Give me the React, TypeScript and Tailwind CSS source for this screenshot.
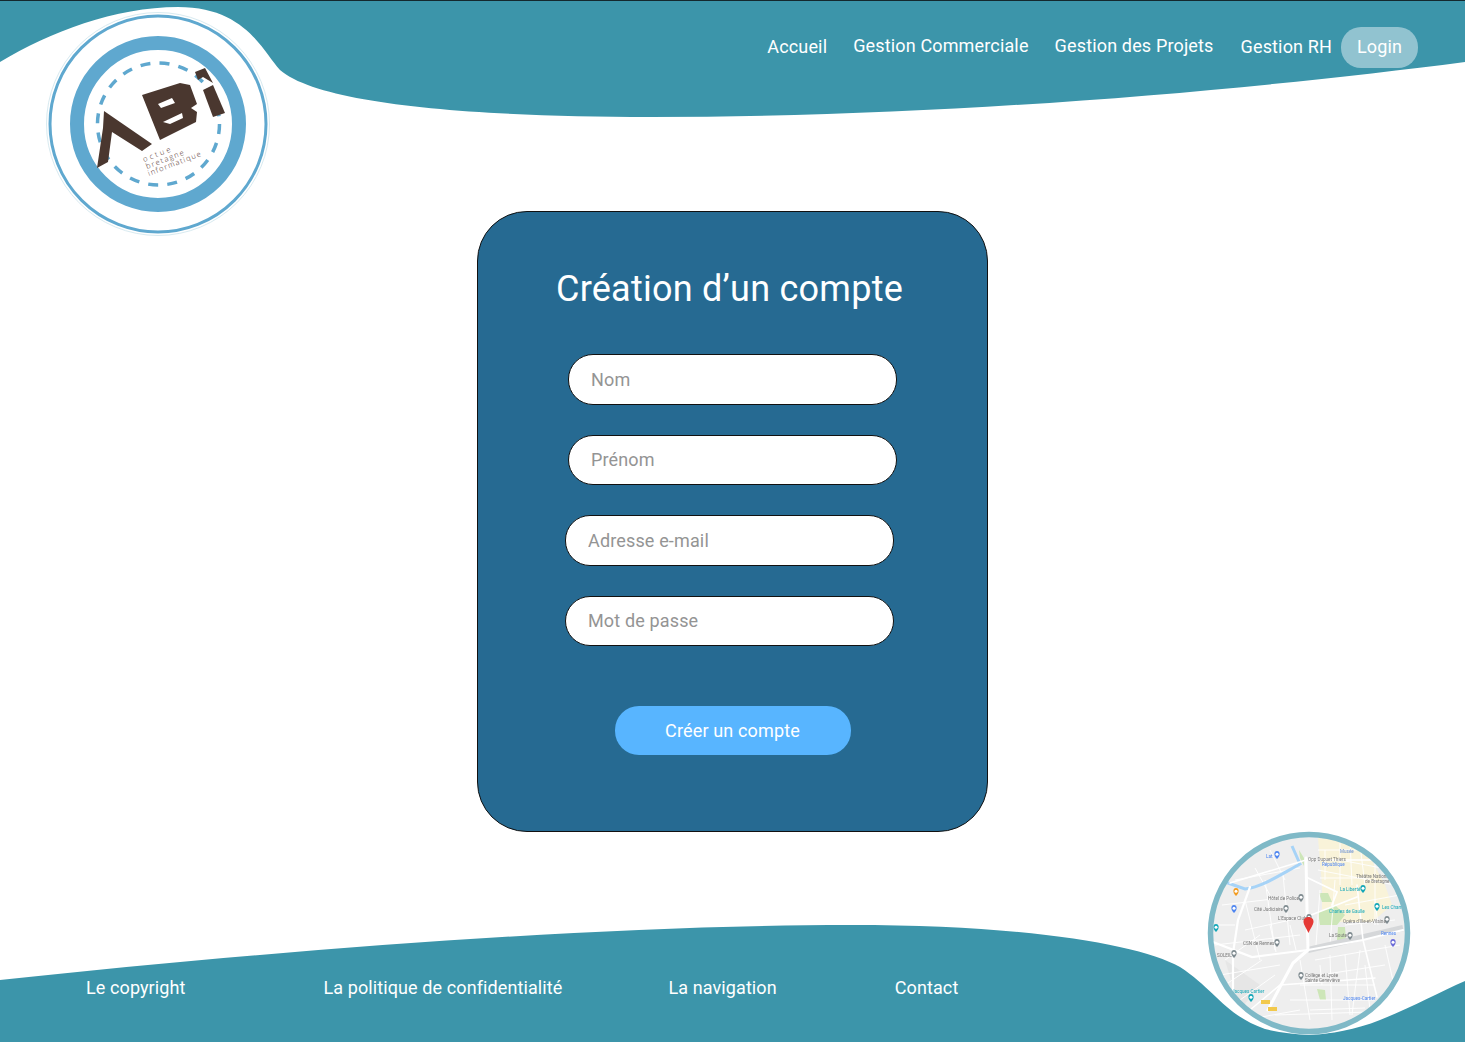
import React from "react";

const font = { fontFamily: "Roboto, sans-serif" };

function HeaderWave() {
  return (
    <svg className="absolute left-0 top-0" width="1465" height="130" viewBox="0 0 1465 130">
      <path
        d="M0 0H1465V62C1250 90 950 117 650 117C480 117 320 105 280 70C262 50 245 7 178 7C115 7 50 32 0 62Z"
        fill="#3c95aa"
      />
      <rect x="0" y="0" width="1465" height="1" fill="#14282e" />
    </svg>
  );
}

function FooterWave() {
  return (
    <svg className="absolute left-0 top-[920px]" width="1465" height="122" viewBox="0 920 1465 122">
      <path
        d="M0 980C280 950 600 925 850 925C1030 925 1140 945 1180 967C1215 990 1225 1015 1265 1029C1300 1038 1340 1036 1380 1020C1410 1008 1440 992 1465 981V1042H0Z"
        fill="#3c95aa"
      />
    </svg>
  );
}

function Logo() {
  const brown = "#4a372f";
  const blue = "#5fa8cf";
  return (
    <svg className="absolute left-[40px] top-[5px]" width="236" height="236" viewBox="40 5 236 236">
      <circle cx="158" cy="124" r="112.5" fill="#fff" />
      <circle cx="158" cy="124" r="111.5" fill="none" stroke="#d8eaf0" strokeWidth="1" />
      <circle cx="158" cy="124" r="108" fill="none" stroke={blue} strokeWidth="3" />
      <circle cx="158" cy="124" r="81" fill="none" stroke={blue} strokeWidth="14" />
      <circle cx="158.5" cy="124" r="61" fill="none" stroke={blue} strokeWidth="3.5" strokeDasharray="10 9.2" />
      <path fill={brown} d="M104 111L152 144L142 151L112 132L108 162L97 168L103 128Z" />
      <path
        fill={brown}
        fillRule="evenodd"
        d="M142 95L180 83L190 85L197 104L191 108L197 112L196 122L160 140ZM158 104L161 108L175 103L172 98ZM163 122L170 124L183 118L182 113Z"
      />
      <path fill={brown} d="M203 90L213 85L225 113L213 117Z" />
      <path fill={brown} d="M195 72L205 68L213 83L203 77L198 80Z" />
      <g fill="#4a2a1c" fontSize="7.5" fontWeight="300" style={{ fontFamily: "'Open Sans', sans-serif" }}>
        <text x="144" y="162" transform="rotate(-21 144 162)" textLength="29" lengthAdjust="spacing">octue</text>
        <text x="147" y="169" transform="rotate(-21 147 169)" textLength="40" lengthAdjust="spacing">bretagne</text>
        <text x="149" y="176" transform="rotate(-21 149 176)" textLength="56" lengthAdjust="spacing">informatique</text>
      </g>
    </svg>
  );
}

function Pin({ x, y, color }: { x: number; y: number; color: string }) {
  return (
    <g>
      <path d={`M${x} ${y + 4}C${x - 3.5} ${y + 1} ${x - 3.5} ${y - 4} ${x} ${y - 4}C${x + 3.5} ${y - 4} ${x + 3.5} ${y + 1} ${x} ${y + 4}Z`} fill={color} />
      <circle cx={x} cy={y - 0.8} r="1.5" fill="#fff" />
    </g>
  );
}

function MapLabel({ x, y, t, c = "#777" }: { x: number; y: number; t: string; c?: string }) {
  return (
    <text x={x} y={y} fill={c} fontSize="4.6" style={{ fontFamily: "Roboto, sans-serif" }}>
      {t}
    </text>
  );
}

const thinStreets = [
  "M1222 905L1290 897", "M1235 880L1300 868", "M1245 930L1300 918", "M1225 960L1260 935",
  "M1265 880L1275 950", "M1283 875L1290 945", "M1320 890L1316 945", "M1335 880L1330 945",
  "M1345 905L1400 895", "M1315 960L1400 945", "M1320 975L1385 965", "M1300 985L1375 985",
  "M1290 1000L1375 1000", "M1275 1015L1370 1012", "M1330 955L1332 1020", "M1345 955L1350 1015",
  "M1300 960L1310 1020", "M1360 950L1352 1015", "M1220 975L1280 965", "M1240 1000L1275 975",
  "M1385 945L1395 990", "M1245 900L1260 960", "M1375 860L1375 925", "M1340 860L1392 870",
  "M1325 850L1325 880", "M1318 870L1395 885", "M1215 925L1235 925", "M1340 840L1340 885",
  "M1350 840L1352 885", "M1360 845L1365 885", "M1318 850L1380 850", "M1320 878L1370 878",
  "M1255 868L1270 895", "M1270 850L1285 880", "M1215 945L1300 935", "M1290 925L1296 950",
  "M1270 925L1276 952", "M1320 965L1322 985", "M1365 965L1370 1010", "M1310 1010L1365 1008",
  "M1375 900L1378 925", "M1345 925L1395 920", "M1225 985L1262 960", "M1245 1020L1300 1010",
];

function CityMap() {
  return (
    <svg className="absolute left-[1200px] top-[825px]" width="220" height="220" viewBox="1200 825 220 220">
      <defs>
        <clipPath id="mapClip">
          <circle cx="1309" cy="933" r="97" />
        </clipPath>
      </defs>
      <circle cx="1309" cy="933" r="102" fill="#fff" opacity="0.8" />
      <g clipPath="url(#mapClip)">
        <g className="blur-[0.35px]">
          <rect x="1200" y="825" width="220" height="220" fill="#eeeeee" />
          <path d="M1318 838L1362 842L1385 885L1392 905L1372 922L1322 922L1322 885Z" fill="#f9f3d9" />
          <path d="M1225 960L1260 985L1240 1010Z" fill="#e6e6e6" />
          <path d="M1319 893L1328 893L1332 902L1322 902Z" fill="#cde6b8" />
          <path d="M1318 912L1335 905L1345 915L1337 925L1320 925Z" fill="#cde6b8" />
          <path d="M1338 927L1345 927L1346 940L1337 940Z" fill="#cde6b8" />
          <path d="M1317 989L1325 990L1326 1000L1320 1000Z" fill="#cde6b8" />
          <path d="M1299 850L1304 858L1304 866L1300 858Z" fill="#cde6b8" />
          {thinStreets.map((d) => (
            <path key={d} d={d} stroke="#fff" strokeWidth="0.9" fill="none" />
          ))}
          <path d="M1308 950L1403 928" stroke="#d5d7d9" strokeWidth="6" fill="none" />
          <path d="M1225 882L1245 889C1262 887 1280 875 1300 864L1292 846" stroke="#a6d3f7" strokeWidth="3" fill="none" />
          <g stroke="#fff" fill="none" strokeLinecap="round">
            <path d="M1306 858L1307 910L1308 950L1293 963L1280 987L1268 1010" strokeWidth="3" />
            <path d="M1213 942L1252 957L1308 950L1363 940L1403 930" strokeWidth="2.2" />
            <path d="M1250 887L1238 920L1233 953L1233 995" strokeWidth="2.2" />
            <path d="M1230 883L1306 860L1395 860" strokeWidth="1.6" />
            <path d="M1306 877L1337 892L1332 905" strokeWidth="1.8" />
            <path d="M1306 917L1357 897" strokeWidth="1.8" />
            <path d="M1357 885L1363 940L1377 997" strokeWidth="1.6" />
            <path d="M1250 1010L1280 985L1375 978" strokeWidth="1.4" />
          </g>
          <Pin x={1277} y={855} color="#4f86f0" />
          <Pin x={1236} y={892} color="#f29b1f" />
          <Pin x={1234} y={909} color="#4f86f0" />
          <Pin x={1216} y={928} color="#14a7b8" />
          <Pin x={1363} y={889} color="#14a7b8" />
          <Pin x={1377} y={907} color="#14a7b8" />
          <Pin x={1301} y={898} color="#7f8b90" />
          <Pin x={1286} y={909} color="#7f8b90" />
          <Pin x={1309} y={918} color="#7f8b90" />
          <Pin x={1387} y={920} color="#7f8b90" />
          <Pin x={1350} y={936} color="#7f8b90" />
          <Pin x={1277} y={943} color="#7f8b90" />
          <Pin x={1234} y={954} color="#7f8b90" />
          <Pin x={1301} y={976} color="#7f8b90" />
          <Pin x={1251} y={998} color="#14a7b8" />
          <Pin x={1393} y={943} color="#6c6cd8" />
          <MapLabel x={1266} y={858} t="Lat" c="#4f86f0" />
          <MapLabel x={1308} y={861} t="Opp Dupuet Thiers" />
          <MapLabel x={1340} y={853} t="Musée" c="#6a8fd0" />
          <MapLabel x={1322} y={866} t="République" c="#4f86f0" />
          <MapLabel x={1356} y={878} t="Théâtre National" />
          <MapLabel x={1365} y={883} t="de Bretagne" />
          <MapLabel x={1340} y={891} t="La Liberté" c="#14a7b8" />
          <MapLabel x={1382} y={909} t="Les Champs" c="#14a7b8" />
          <MapLabel x={1329} y={913} t="Charles de Gaulle" c="#14a7b8" />
          <MapLabel x={1343} y={923} t="Opéra d'Ille-et-Vilaine" />
          <MapLabel x={1381} y={935} t="Rennes" c="#4f86f0" />
          <MapLabel x={1268} y={900} t="Hôtel de Police" />
          <MapLabel x={1254} y={911} t="Cité Judiciaire" />
          <MapLabel x={1278} y={920} t="L'Espace Clubs" />
          <MapLabel x={1329} y={937} t="La Soute" />
          <MapLabel x={1243} y={945} t="CSN de Rennes" />
          <MapLabel x={1217} y={957} t="SOLEIL" />
          <MapLabel x={1305} y={977} t="Collège et Lycée" />
          <MapLabel x={1305} y={982} t="Sainte Geneviève" />
          <MapLabel x={1343} y={1000} t="Jacques-Cartier" c="#4f86f0" />
          <MapLabel x={1232} y={993} t="Jacques Cartier" c="#14a7b8" />
          <rect x="1261" y="1000" width="9" height="4" fill="#f2c94c" />
          <rect x="1268" y="1007" width="9" height="4" fill="#f2c94c" />
          <path d="M1308.5 933C1305 926 1303.5 924 1303.5 921.5C1303.5 918.5 1306 917 1308.5 917C1311 917 1313.5 918.5 1313.5 921.5C1313.5 924 1312 926 1308.5 933Z" fill="#e53935" />
        </g>
      </g>
      <circle cx="1309" cy="933" r="98.5" fill="none" stroke="#7fb9c7" strokeWidth="5.5" />
    </svg>
  );
}

function Field({ label, className }: { label: string; className: string }) {
  return (
    <input
      placeholder={label}
      className={`h-[50.5px] w-[329px] shrink-0 rounded-[25px] border border-[#111] bg-white px-[22px] text-[18px] tracking-[0.15px] text-[#333] outline-none placeholder:text-[#949494] ${className}`}
    />
  );
}

export default function App() {
  return (
    <div style={font} className="relative flex h-[1042px] w-full flex-col overflow-hidden bg-white">
      <HeaderWave />
      <FooterWave />
      <Logo />
      <CityMap />

      <header className="relative flex h-[211px] shrink-0 items-start justify-end pr-[47px] pt-[27px] text-[18px] tracking-[0.15px] text-white">
        <nav className="flex items-start">
          <a className="mt-[9px] leading-[21px]">Accueil</a>
          <a className="ml-[26px] mt-[8px] leading-[21px]">Gestion Commerciale</a>
          <a className="ml-[26px] mt-[8px] leading-[21px]">Gestion des Projets</a>
          <a className="ml-[27px] mt-[9px] leading-[21px]">Gestion RH</a>
          <a className="ml-[9px] flex h-[41px] w-[77px] items-center justify-center rounded-[20px] bg-[#91c3d0] pb-[2px]">Login</a>
        </nav>
      </header>

      <main className="relative flex h-[621px] shrink-0 justify-center">
        <form className="flex h-full w-[511px] flex-col items-center rounded-[50px] border border-[#111] bg-[#266a92]">
          <h1 className="mr-[6px] mt-[55px] text-[36px] font-normal leading-[45px] tracking-[0.25px] text-white">Création d’un compte</h1>
          <Field label="Nom" className="mt-[42px]" />
          <Field label="Prénom" className="mt-[30px]" />
          <Field label="Adresse e-mail" className="mr-[6px] mt-[30px]" />
          <Field label="Mot de passe" className="mr-[6px] mt-[30px]" />
          <button
            type="button"
            className="mt-[60px] h-[49px] w-[236px] rounded-[24px] bg-[#58b5ff] pb-[1px] text-[18px] tracking-[0.15px] text-white"
          >
            Créer un compte
          </button>
        </form>
      </main>

      <footer className="relative flex flex-1 items-start pl-[86px] pt-[145px] text-[18px] leading-[21px] tracking-[0.1px] text-white">
        <a>Le copyright</a>
        <a className="ml-[138px]">La politique de confidentialité</a>
        <a className="ml-[106px]">La navigation</a>
        <a className="ml-[118px]">Contact</a>
      </footer>
    </div>
  );
}
